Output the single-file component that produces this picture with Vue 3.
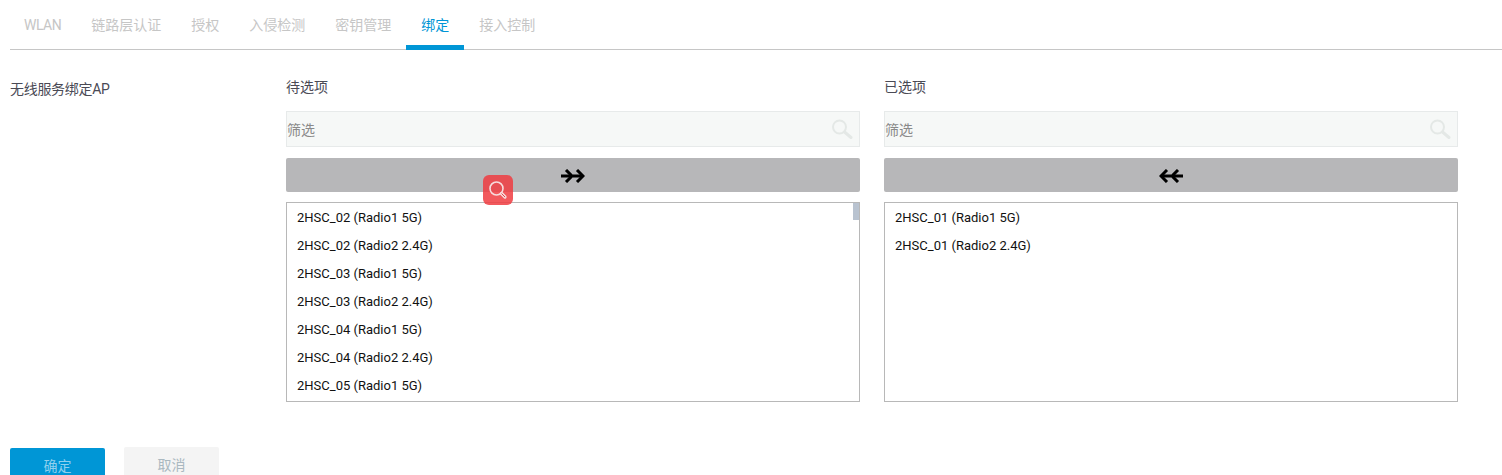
<script setup>
const tabs = [
  { label: 'WLAN', latin: true },
  { label: '链路层认证' },
  { label: '授权' },
  { label: '入侵检测' },
  { label: '密钥管理' },
  { label: '绑定', active: true },
  { label: '接入控制' },
]
const panels = [
  {
    title: '待选项',
    dir: 'right',
    scroll: true,
    items: [
      '2HSC_02 (Radio1 5G)', '2HSC_02 (Radio2 2.4G)',
      '2HSC_03 (Radio1 5G)', '2HSC_03 (Radio2 2.4G)',
      '2HSC_04 (Radio1 5G)', '2HSC_04 (Radio2 2.4G)',
      '2HSC_05 (Radio1 5G)',
    ],
  },
  {
    title: '已选项',
    dir: 'left',
    scroll: false,
    items: ['2HSC_01 (Radio1 5G)', '2HSC_01 (Radio2 2.4G)'],
  },
]
</script>

<template>
  <div class="page">
    <nav class="tabs">
      <a v-for="t in tabs" :key="t.label" class="tab" :class="{ active: t.active, latin: t.latin }">{{ t.label }}</a>
    </nav>

    <section class="form-row">
      <div class="row-label">无线服务绑定AP</div>
      <div class="panels">
        <div v-for="p in panels" :key="p.title" class="panel">
          <div class="panel-title">{{ p.title }}</div>
          <div class="filter">
            <span class="filter-text">筛选</span>
            <svg class="filter-icon" width="22" height="20" viewBox="0 0 22 20" fill="none">
              <circle cx="8.5" cy="8" r="6.5" stroke="#e4e8e6" stroke-width="2" />
              <path d="M13.5 13 L20 18.5" stroke="#e4e8e6" stroke-width="3" stroke-linecap="round" />
            </svg>
          </div>
          <button class="move" type="button">
            <svg class="arrows" width="24" height="14" viewBox="0 0 24 14" :class="{ flip: p.dir === 'left' }">
              <path d="M0 5.5 H10 V8.5 H0 Z M12 5.5 H22 V8.5 H12 Z" fill="#000" />
              <path d="M5 1 L11 7 L5 13 M16 1 L22 7 L16 13" fill="none" stroke="#000" stroke-width="3" />
            </svg>
          </button>
          <div class="list">
            <div v-for="(it, i) in p.items" :key="i" class="item">{{ it }}</div>
            <span v-if="p.scroll" class="thumb"></span>
          </div>
        </div>
      </div>
    </section>

    <footer class="actions">
      <button class="btn primary" type="button">确定</button>
      <button class="btn ghost" type="button">取消</button>
    </footer>

    <div class="badge">
      <svg width="20" height="20" viewBox="0 0 20 20" fill="none">
        <circle cx="8.5" cy="8.5" r="6.5" stroke="#f6dcdd" stroke-width="1.6" />
        <path d="M13.5 13.5 L17 17" stroke="#f6dcdd" stroke-width="3.2" stroke-linecap="round" />
        <path d="M13.8 13.8 L16.8 16.8" stroke="#e2484d" stroke-width="1" stroke-linecap="round" />
      </svg>
    </div>
  </div>
</template>

<style scoped>
.page {
  position: relative;
  width: 1502px;
  height: 475px;
  overflow: hidden;
  background: #fff;
  font-family: Roboto, "Noto Sans CJK SC", sans-serif;
  font-size: 13px;
}
.tabs {
  display: flex;
  margin-left: 10px;
  height: 50px;
  box-sizing: border-box;
  border-bottom: 1px solid #c6c6c6;
}
.tab {
  height: 50px;
  box-sizing: border-box;
  padding: 16px 15px 0;
  font-size: 14px;
  line-height: 19px;
  color: #c6c6c6;
}
.tab.latin { padding-left: 14px; letter-spacing: -0.5px; }
.tab.active {
  color: #0096d6;
  border-bottom: 5px solid #0096d6;
}
.form-row {
  display: flex;
  padding: 28px 44px 0 10px;
}
.row-label {
  width: 276px;
  flex: none;
  padding-top: 1px;
  font-size: 14px;
  line-height: 20px;
  letter-spacing: -0.3px;
  color: #4a4a55;
}
.panels {
  display: flex;
  gap: 24px;
}
.panel { width: 574px; }
.panel-title {
  height: 33px;
  margin-top: -1px;
  padding-bottom: 1px;
  font-size: 14px;
  line-height: 20px;
  color: #4a4a55;
}
.filter {
  display: flex;
  align-items: center;
  justify-content: space-between;
  height: 36px;
  box-sizing: border-box;
  border: 1px solid #e7eaea;
  background: #f6f8f7;
  padding: 0 6px 0 0;
  color: #8a8a8a;
  font-size: 14px;
}
.move {
  display: flex;
  align-items: center;
  justify-content: center;
  width: 100%;
  height: 34px;
  margin-top: 11px;
  border: 0;
  border-radius: 2px;
  background: #b7b7b9;
  padding: 2px 0 0;
}
.flip { transform: scaleX(-1); }
.list {
  position: relative;
  height: 200px;
  margin-top: 10px;
  box-sizing: border-box;
  border: 1px solid #b8b8b8;
  padding-top: 1px;
  overflow: hidden;
}
.item {
  height: 28px;
  line-height: 28px;
  padding-left: 10px;
  color: #111;
  white-space: nowrap;
}
.thumb {
  position: absolute;
  top: 0;
  right: 0;
  width: 6px;
  height: 17px;
  background: #b9c3d0;
}
.actions {
  display: flex;
  align-items: flex-start;
  gap: 19px;
  padding: 45px 0 0 10px;
}
.btn {
  width: 95px;
  height: 40px;
  border: 0;
  border-radius: 2px;
  padding: 0 0 6px;
  font-family: inherit;
  font-size: 14px;
}
.primary {
  margin-top: 1px;
  background: #0096d6;
  color: #8fd0ee;
}
.ghost {
  background: #f4f4f4;
  color: #aab8c0;
}
.badge {
  position: absolute;
  left: 483px;
  top: 175px;
  width: 30px;
  height: 30px;
  display: flex;
  align-items: center;
  justify-content: center;
  border-radius: 6px;
  background: rgba(240, 60, 65, 0.85);
}
</style>

<style>
html, body { margin: 0; overflow: hidden; background: #fff; }
</style>
